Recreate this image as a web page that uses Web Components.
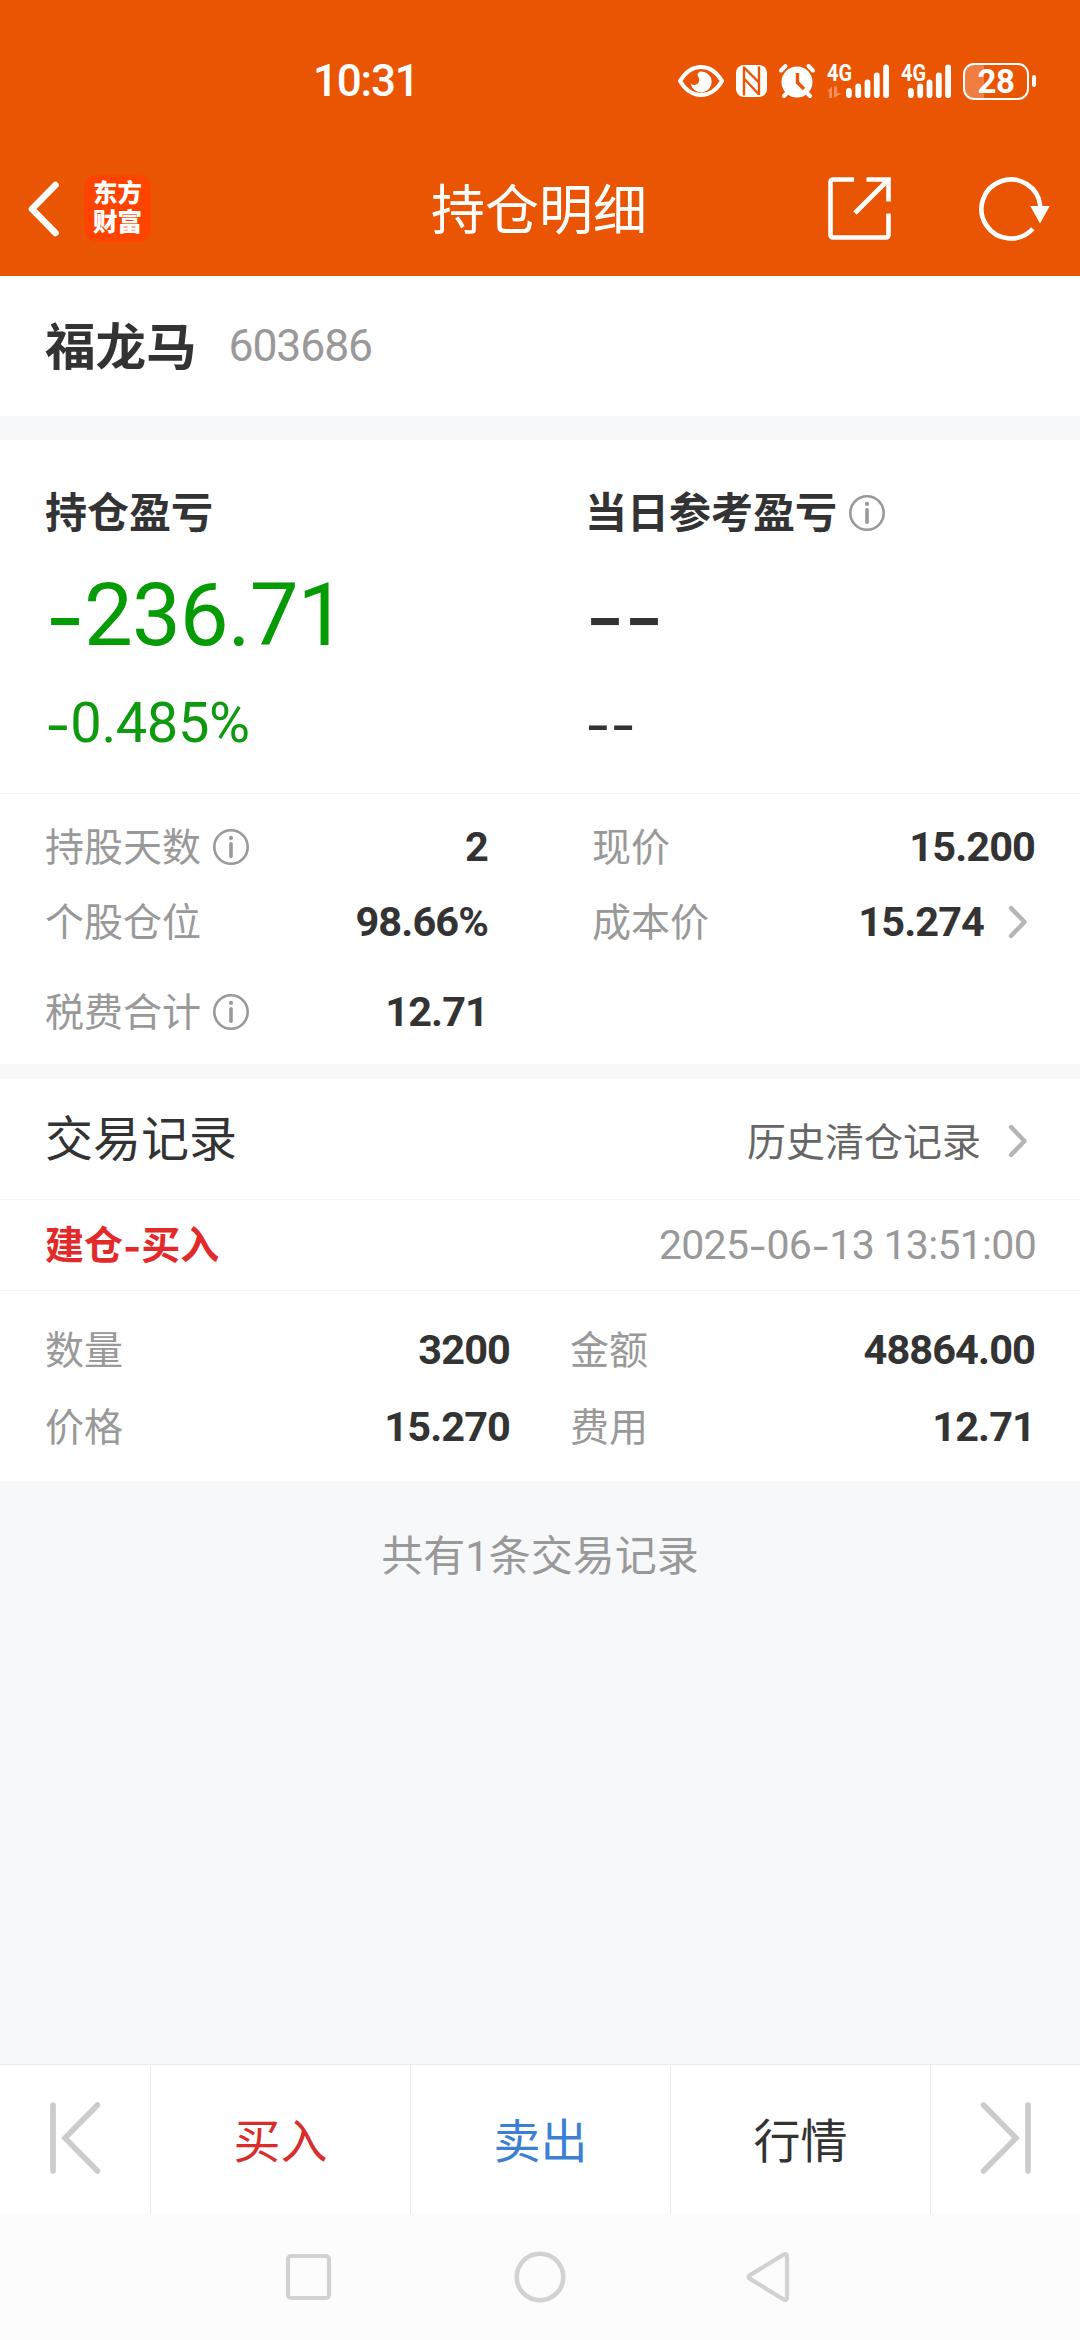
<!DOCTYPE html>
<html lang="zh-CN">
<head>
<meta charset="utf-8">
<title>持仓明细</title>
<style>
	html, body {
		margin: 0;
		padding: 0;
	}

	body {
		width: 1080px;
		height: 2340px;
		overflow: hidden;
		background-color: #f7f8fa;
		font-family: Roboto, "Noto Sans CJK SC", sans-serif;
		line-height: 1.2;
		color: #333333;
	}
</style>
</head>
<body>
<position-page></position-page>

<script>
const ICONS = {
	eye: [46, 32, `<path d="M2 16C8 6 16 2 23 2s15 4 21 14C38 26 30 30 23 30S8 26 2 16Z" fill="none" stroke="#fff" stroke-width="4" stroke-linejoin="round"/>
		<path d="M23 6.500a10.500 10.500 0 1 1-10.300 11.500c1.500 2.500 5 2.700 7 .6 3-3 1-6-.2-8.600 0-1.500 1.500-3.500 3.500-3.500Z" fill="#fff"/>`],
	nfc: [31, 32, `<path d="M8 0h15a8 8 0 0 1 8 8v16a8 8 0 0 1-8 8H8a8 8 0 0 1-8-8V8a8 8 0 0 1 8-8Z" fill="#fff"/>
		<path d="M8 1.500V30.500M8.500 3L23 17.500M8.500 14l14 15M23 1.500V30" fill="none" stroke="#ea5504" stroke-width="2.400"/>`],
	alarm: [36, 34, `<circle cx="18" cy="18" r="15.500" fill="#fff"/>
		<path d="M2 6.500L6.500 2M29.500 2L34 6.500M5 32l4-4M27 28l4 4" stroke="#fff" stroke-width="4" stroke-linecap="round"/>
		<path d="M18.500 9v9.500l6.500 6.500" fill="none" stroke="#ea5504" stroke-width="3.400"/>`],
	back: [34, 58, `<path d="M28.500 5L5 29l23.500 24" fill="none" stroke="#fff" stroke-width="6.600" stroke-linecap="round" stroke-linejoin="round"/>`],
	share: [64, 64, `<path d="M26 2.500H5a2.500 2.500 0 0 0-2.500 2.500v53A2.500 2.500 0 0 0 5 60.500h53a2.500 2.500 0 0 0 2.500-2.500V36.500M38.500 2.500h22v22M60.500 2.500L27 36" fill="none" stroke="#fff" stroke-width="4.600"/>`],
	refresh: [72, 64, `<path d="M61.300 29A29.500 29.500 0 1 0 53.800 51.800" fill="none" stroke="#fff" stroke-width="4.600"/>
		<path d="M51.300 29h19.400L61 46.500Z" fill="#fff"/>`],
	info: [36, 36, `<circle cx="18" cy="18" r="16.700" fill="none" stroke="#999" stroke-width="2.600"/>
		<circle cx="18" cy="8.900" r="2.100" fill="#999"/>
		<path d="M18 14.700v12.600" stroke="#999" stroke-width="3.600" stroke-linecap="round"/>`],
	more: [20, 34, `<path d="M3 3l13.500 14L3 31" fill="none" stroke="#b5b5b5" stroke-width="4.400" stroke-linecap="round" stroke-linejoin="round"/>`],
	first: [50, 72, `<path d="M3 3v66M47.500 3L15 36l32.500 33" fill="none" stroke="#ccc" stroke-width="5.600" stroke-linecap="round"/>`],
	last: [50, 72, `<path d="M47 3v66M2.500 3L35 36L2.500 69" fill="none" stroke="#ccc" stroke-width="5.600" stroke-linecap="round"/>`],
	square: [45, 46, `<rect x="2" y="2" width="41" height="42" rx="3" fill="none" stroke="#d2d2d2" stroke-width="4.200"/>`],
	circle: [52, 52, `<circle cx="26" cy="26" r="23.300" fill="none" stroke="#d2d2d2" stroke-width="4.600"/>`],
	triangle: [44, 52, `<path d="M41 5.500v41c0 2-1.500 3-3.200 2L3.600 27.600c-1.400-.9-1.400-2.300 0-3.200L37.800 3.500c1.700-1 3.200 0 3.200 2Z" fill="none" stroke="#d2d2d2" stroke-width="4.200"/>`]
};

// the default hyphen is too short next to the figures
function withDash(text) {
	return text.replace(/-/g, '<span class="dash">-</span>');
}

const dashStyle = `
	.dash {
		font-family: Inter, sans-serif;
		line-height: 0;
		vertical-align: -0.045em;
	}
`;

function define(name, render) {
	customElements.define(name, class extends HTMLElement {
		constructor() {
			super();
			this.attachShadow({ mode: 'open' });
		}

		connectedCallback() {
			const template = document.createElement('template');
			template.innerHTML = render(this);
			this.shadowRoot.replaceChildren(template.content.cloneNode(true));
		}
	});
}

define('app-icon', (el) => {
	const [w, h, body] = ICONS[el.getAttribute('name')];
	return `
	<style>
		:host { display: block; flex: none; width: ${w}px; height: ${h}px; }
		svg { display: block; overflow: visible; }
	</style>
	<svg width="${w}" height="${h}" viewBox="0 0 ${w} ${h}">${body}</svg>`;
});

define('signal-bars', (el) => {
	const first = Number(el.getAttribute('first'));
	const heights = [10, 14.5, 18.5, 25.5, 33.5];
	const bars = heights.map((h, i) =>
		`<rect x="${first + i * 9.3}" y="${34 - h}" width="5.800" height="${h}" rx="2.900" fill="#fff"/>`).join('');
	const arrows = el.hasAttribute('data')
		? '<path d="M0 27.500L5 22.500V34H2.200V27.500ZM7 22.500h3v6.500h4.500L7 34Z" fill="#fff" opacity=".35"/>' : '';
	const w = first + 43;
	return `
	<style>
		:host { display: block; width: ${w}px; height: 34px; }
		svg { display: block; overflow: visible; }
		text { font-size: 23px; font-weight: 700; fill: #ffffff; }
	</style>
	<svg width="${w}" height="34">
		<text x="0" y="17" textLength="25" lengthAdjust="spacingAndGlyphs">4G</text>
		${arrows}${bars}
	</svg>`;
});

define('status-bar', () => `
	<style>
		:host {
			display: flex;
			align-items: center;
			justify-content: space-between;
			height: 162px;
			padding: 0 44px 0 313px;
			box-sizing: border-box;
			background-color: #ea5504;
			color: #ffffff;
		}
		.time { padding-top: 1px; font-size: 44px; font-weight: 500; letter-spacing: -1.2px; }
		.icons { display: flex; align-items: center; }
		.icons > * { flex: none; }
		.nfc { margin-left: 12px; }
		.alarm { margin-left: 12px; }
		.sim1 { margin-left: 12px; }
		.sim2 { margin-left: 12px; }
		.battery {
			width: 66px;
			height: 37px;
			margin-left: 12px;
			box-sizing: border-box;
			border: 2.5px solid #ffffff;
			border-radius: 11px;
			background: linear-gradient(90deg, rgba(255,255,255,.24) 19px, transparent 19px);
			font-size: 33px;
			font-weight: 700;
			line-height: 33px;
			text-align: center;
			letter-spacing: -0.5px;
		}
		.nub {
			width: 4px;
			height: 12px;
			margin-left: 3px;
			border-radius: 2px;
			background-color: #ffffff;
		}
	</style>
	<span class="time">10:31</span>
	<div class="icons">
		<app-icon name="eye"></app-icon>
		<app-icon class="nfc" name="nfc"></app-icon>
		<app-icon class="alarm" name="alarm"></app-icon>
		<signal-bars class="sim1" first="19" data></signal-bars>
		<signal-bars class="sim2" first="7"></signal-bars>
		<div class="battery">28</div>
		<div class="nub"></div>
	</div>
`);

define('nav-bar', () => `
	<style>
		:host {
			display: grid;
			grid-template-columns: 1fr auto 1fr;
			align-items: center;
			height: 114px;
			padding: 0 29px 21px 27px;
			box-sizing: border-box;
			background-color: #ea5504;
			color: #ffffff;
		}
		.left { display: flex; align-items: center; gap: 23px; }
		.logo {
			display: flex;
			flex-direction: column;
			justify-content: center;
			width: 67px;
			height: 67px;
			border-radius: 14px;
			background-color: #ff4400;
			font-size: 24.5px;
			font-weight: 900;
			line-height: 28.5px;
			text-align: center;
		}
		.title { font-size: 54px; line-height: 70px; padding-top: 6px; }
		.right { display: flex; align-items: center; justify-content: flex-end; gap: 87px; }
	</style>
	<div class="left">
		<app-icon name="back"></app-icon>
		<div class="logo"><span>东方</span><span>财富</span></div>
	</div>
	<div class="title"><slot></slot></div>
	<div class="right">
		<app-icon name="share"></app-icon>
		<app-icon name="refresh"></app-icon>
	</div>
`);

define('stock-title', (el) => `
	<style>
		:host {
			display: flex;
			align-items: center;
			height: 140px;
			padding: 2px 45px 0;
			box-sizing: border-box;
			background-color: #ffffff;
		}
		.name { padding-top: 3px; font-size: 50.5px; font-weight: 700; }
		.code { margin-left: 32px; font-size: 44.5px; letter-spacing: -1.1px; color: #999999; }
	</style>
	<span class="name"><slot></slot></span>
	<span class="code">${el.getAttribute('code')}</span>
`);

define('profit-cell', (el) => `
	<style>
		${dashStyle}
		:host { display: block; flex: none; width: 540px; }
		.label { display: flex; align-items: center; gap: 12px; height: 60px; font-size: 42px; font-weight: 700; }
		.label span { padding-top: 3px; }
		.amount { height: 100px; margin-top: 22px; font-size: 87px; line-height: 100px; letter-spacing: -1px; }
		.rate { height: 60px; margin-top: 28px; font-size: 56px; line-height: 60px; letter-spacing: -0.4px; }
		:host([down]) .amount { color: #049b04; }
		:host([down]) .rate { color: #0f990f; }
	</style>
	<div class="label"><span><slot></slot></span>${el.hasAttribute('info') ? '<app-icon name="info"></app-icon>' : ''}</div>
	<div class="amount">${withDash(el.getAttribute('amount'))}</div>
	<div class="rate">${withDash(el.getAttribute('rate'))}</div>
`);

define('data-cell', (el) => `
	<style>
		:host { display: flex; align-items: center; }
		.label { font-size: 39px; padding-top: 3px; color: #999999; }
		app-icon { margin-left: 12px; }
		.value { margin-left: auto; font-size: 41.5px; font-weight: 700; letter-spacing: -0.9px; }
		app-icon.more { margin: 0 7px 0 24px; }
	</style>
	<span class="label"><slot></slot></span>
	${el.hasAttribute('info') ? '<app-icon name="info"></app-icon>' : ''}
	<span class="value">${el.getAttribute('value')}</span>
	${el.hasAttribute('more') ? '<app-icon class="more" name="more"></app-icon>' : ''}
`);

define('record-head', (el) => `
	<style>
		:host {
			display: flex;
			align-items: center;
			height: 120px;
			padding: 0 52px 0 45px;
			box-sizing: border-box;
			background-color: #ffffff;
		}
		.title { padding-top: 2px; font-size: 48px; }
		.link { margin-left: auto; padding-top: 9px; font-size: 39px; color: #666666; }
		app-icon { margin: 4px 0 0 27px; }
	</style>
	<span class="title"><slot></slot></span>
	<span class="link">${el.getAttribute('link')}</span>
	<app-icon name="more"></app-icon>
`);

define('trade-head', (el) => `
	<style>
		${dashStyle}
		:host {
			display: flex;
			align-items: center;
			justify-content: space-between;
			height: 92px;
			padding: 2px 44px 0 45px;
			box-sizing: border-box;
			border-top: 1px solid #f4f4f5;
			border-bottom: 1px solid #f4f4f5;
			background-color: #ffffff;
		}
		.type { font-size: 39px; font-weight: 700; color: #e32a2b; }
		.date { font-size: 41px; letter-spacing: -0.7px; color: #999999; }
	</style>
	<span class="type">${withDash(el.getAttribute('type'))}</span>
	<span class="date">${withDash(el.getAttribute('date'))}</span>
`);

define('bottom-bar', () => `
	<style>
		:host {
			display: grid;
			grid-template-columns: 150px 260px 260px 260px 150px;
			height: 150px;
			box-sizing: border-box;
			border-top: 1px solid #ebebeb;
			background-color: #ffffff;
			font-size: 47px;
		}
		div {
			display: flex;
			align-items: center;
			justify-content: center;
			box-sizing: border-box;
			padding-top: 5px;
		}
		div + div { border-left: 1px solid #ebebeb; }
		.icon { padding: 0 0 4px; }
		.buy { color: #d92c2c; }
		.sell { color: #3c7fd3; }
	</style>
	<div class="icon"><app-icon name="first"></app-icon></div>
	<div class="buy">买入</div>
	<div class="sell">卖出</div>
	<div>行情</div>
	<div class="icon"><app-icon name="last"></app-icon></div>
`);

define('system-nav', () => `
	<style>
		:host {
			display: flex;
			align-items: center;
			height: 126px;
			padding-left: 286px;
			box-sizing: border-box;
			background-color: #fcfcfc;
		}
		.home { margin: 0 180px 0 183px; }
	</style>
	<app-icon name="square"></app-icon>
	<app-icon class="home" name="circle"></app-icon>
	<app-icon name="triangle"></app-icon>
`);

define('position-page', () => `
	<style>
		:host {
			display: flex;
			flex-direction: column;
			width: 1080px;
			height: 2340px;
			background-color: #f7f8fa;
		}
		.profit {
			display: flex;
			height: 353px;
			margin-top: 24px;
			padding: 43px 0 0 45px;
			box-sizing: border-box;
			overflow: hidden;
			background-color: #ffffff;
		}
		.holding {
			display: grid;
			grid-template-columns: 443px 443px;
			grid-template-rows: 76px 74px 105px;
			column-gap: 104px;
			height: 271px;
			padding: 15px 45px 0;
			margin-bottom: 15px;
			box-sizing: border-box;
			border-top: 1px solid #f4f4f5;
			background-color: #ffffff;
		}
		.trade {
			display: grid;
			grid-template-columns: 465px 465px;
			grid-template-rows: 77px 77px;
			column-gap: 60px;
			height: 190px;
			padding: 20px 45px 0;
			box-sizing: border-box;
			background-color: #ffffff;
		}
		.total {
			flex: 1;
			padding-top: 46px;
			font-size: 42px;
			line-height: 60px;
			text-align: center;
			color: #999999;
		}
	</style>
	<status-bar></status-bar>
	<nav-bar>持仓明细</nav-bar>
	<stock-title code="603686">福龙马</stock-title>
	<div class="profit">
		<profit-cell amount="-236.71" rate="-0.485%" down>持仓盈亏</profit-cell>
		<profit-cell amount="--" rate="--" info>当日参考盈亏</profit-cell>
	</div>
	<div class="holding">
		<data-cell value="2" info>持股天数</data-cell>
		<data-cell value="15.200">现价</data-cell>
		<data-cell value="98.66%">个股仓位</data-cell>
		<data-cell value="15.274" more>成本价</data-cell>
		<data-cell value="12.71" info>税费合计</data-cell>
	</div>
	<record-head link="历史清仓记录">交易记录</record-head>
	<trade-head type="建仓-买入" date="2025-06-13 13:51:00"></trade-head>
	<div class="trade">
		<data-cell value="3200">数量</data-cell>
		<data-cell value="48864.00">金额</data-cell>
		<data-cell value="15.270">价格</data-cell>
		<data-cell value="12.71">费用</data-cell>
	</div>
	<div class="total">共有1条交易记录</div>
	<bottom-bar></bottom-bar>
	<system-nav></system-nav>
`);
</script>
</body>
</html>
